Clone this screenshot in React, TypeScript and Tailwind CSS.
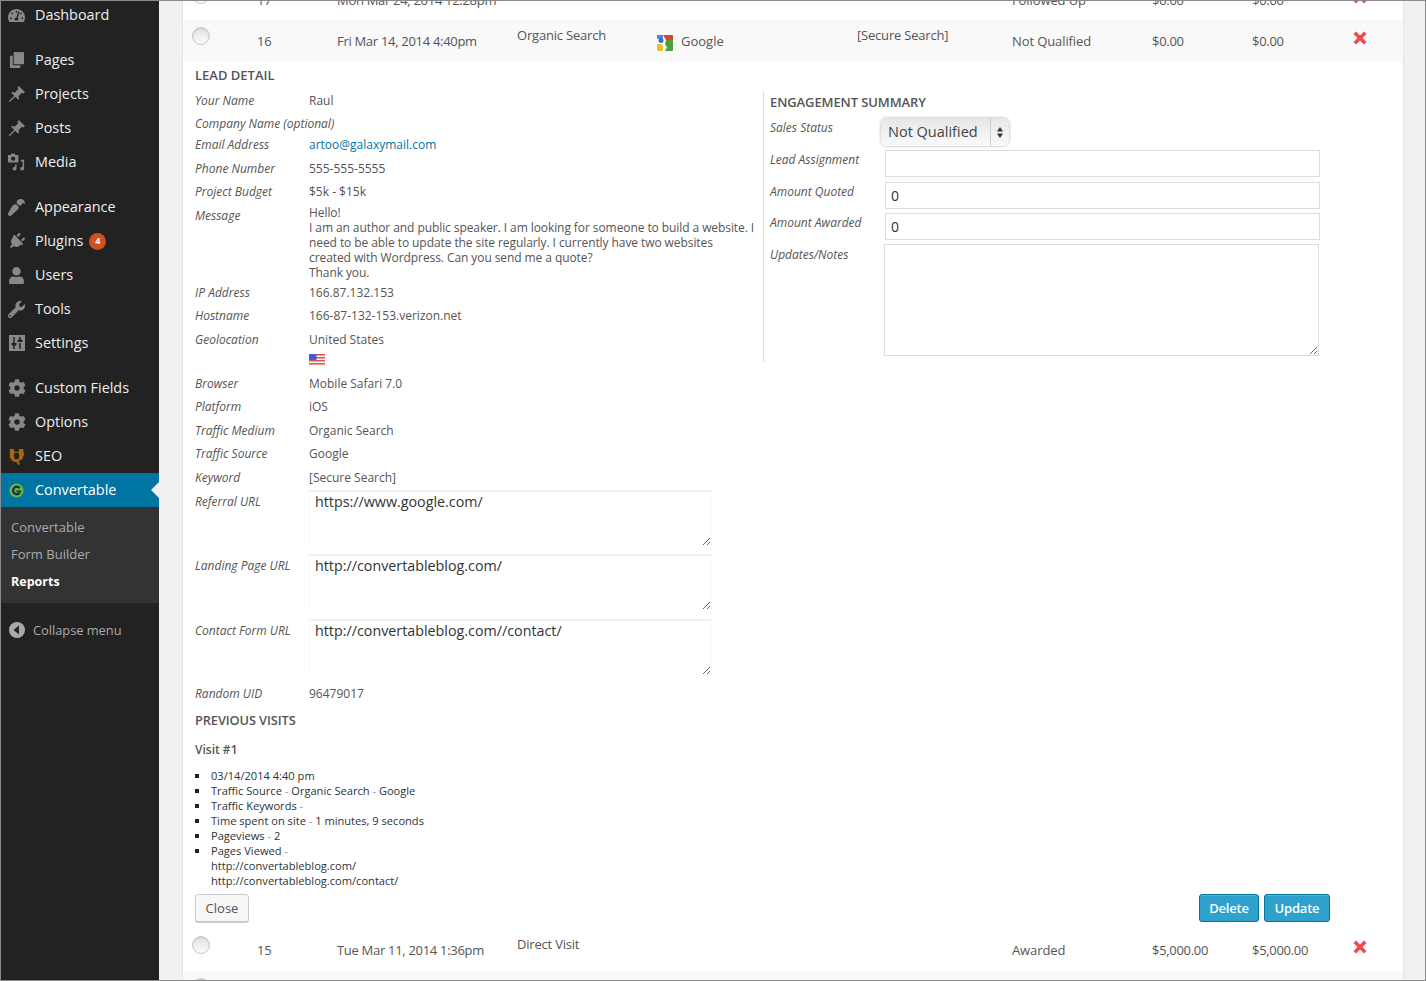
import type { ReactNode } from "react";
import { FaCog, FaPlug, FaUser, FaWrench, FaPaintBrush, FaTachometerAlt } from "react-icons/fa";

const iconClass = "h-[17px] w-[17px] text-[#888]";

function PinIcon() {
  return (
    <svg viewBox="0 0 20 20" className="h-[18px] w-[18px]" fill="#888">
      <path d="M12 1 19 8 17 9.500 15.500 8.500 11.500 12.500C12.500 14 12.500 15.500 11.500 16.500L8 13 2 19H1V18L7 12 3.500 8.500C4.500 7.500 6 7.500 7.500 8.500L11.500 4.500 10.500 3z" />
    </svg>
  );
}

function PagesIcon() {
  return (
    <svg viewBox="0 0 16 18" className="h-[17px] w-[15px]" fill="#888">
      <path d="M5 0h11v13H5z" />
      <path d="M1 4h3v10h8v3H1z" />
    </svg>
  );
}

function MediaIcon() {
  return (
    <svg viewBox="0 0 20 20" className="h-[19px] w-[19px]" fill="#888">
      <path d="M1 2h3l1-1.500h3L9 2h3v8H1z" />
      <circle cx="6.500" cy="6" r="2.200" fill="#222" />
      <path d="M18 7v9.500a2 1.800 0 1 1-1.500-1.700V9h-2V7zM10 12v4.500a2 1.800 0 1 1-1.500-1.700V12z" />
    </svg>
  );
}

function SettingsIcon() {
  return (
    <svg viewBox="0 0 16 16" className="h-[16px] w-[16px]">
      <rect width="16" height="16" fill="#888" />
      <path d="M5 2v6M5 12v2M11 2v2M11 8v6" stroke="#222" strokeWidth="1.500" />
      <path d="M2.500 8h5v1.500L5 12 2.500 9.500zM8.500 7h5V5.500L11 3.500 8.500 5.500z" fill="#222" />
    </svg>
  );
}

function SeoIcon() {
  return (
    <svg viewBox="0 0 18 18" className="h-[17px] w-[17px]" fill="#a8660f">
      <path d="M2 1h4l1 3h4l1-3h4l1 6-2 5-4 2 2 3-2 1-2-3-4-1-3-4z" />
      <path d="M7 5h4l1 3-1 4H7L6 8z" fill="#222" />
    </svg>
  );
}

function ConvertableIcon() {
  return (
    <svg viewBox="0 0 16 16" className="h-[15px] w-[15px]">
      <circle cx="8" cy="8" r="7.500" fill="#6cb33f" />
      <path d="M11.500 5.500A4 4 0 1 0 11.500 10.500" fill="none" stroke="#11304a" strokeWidth="2.400" />
      <path d="M8 8h5v2H8z" fill="#11304a" />
    </svg>
  );
}

function GoogleIcon() {
  return (
    <svg viewBox="0 0 16 16" className="h-[16px] w-[16px]">
      <rect width="16" height="16" rx="1" fill="#fff" />
      <path d="M0 0h6v4H0z" fill="#4a86e8" />
      <path d="M6 0h9a1 1 0 0 1 1 1v4H9z" fill="#d9432f" />
      <path d="M9 5h7v10a1 1 0 0 1-1 1H7z" fill="#4f9f3a" />
      <path d="M0 9h5l2 7H1a1 1 0 0 1-1-1z" fill="#f3c02c" />
      <circle cx="4" cy="5.500" r="2.500" fill="#3f6fc4" />
      <path d="M6 7l4 5-2 4H6z" fill="#fff" />
    </svg>
  );
}

function DeleteIcon() {
  return (
    <svg viewBox="0 0 14 14" className="h-[14px] w-[14px]" fill="#f0494f">
      <path d="M3 .5 7 4.500 11 .5 13.500 3 9.500 7 13.500 11 11 13.500 7 9.500 3 13.500.5 11 4.500 7 .5 3z" />
    </svg>
  );
}

function FlagIcon() {
  return (
    <svg viewBox="0 0 16 11" className="h-[11px] w-[16px]">
      <rect width="16" height="11" fill="#f4f4f4" />
      <path d="M0 0h16v1.500H0zM0 3h16v1.500H0zM0 6h16v1.500H0zM0 9h16v1.500H0z" fill="#e0524a" />
      <rect width="7.500" height="6" fill="#3f5fd0" />
    </svg>
  );
}

function CollapseIcon() {
  return (
    <svg viewBox="0 0 16 16" className="h-[16px] w-[16px]">
      <circle cx="8" cy="8" r="8" fill="#aaa" />
      <path d="M10 3.500v9L4.500 8z" fill="#222" />
    </svg>
  );
}

type NavItem = { label: string; icon: ReactNode; badge?: string; gap?: boolean };

const navItems: NavItem[] = [
  { label: "Dashboard", icon: <FaTachometerAlt className={iconClass} />, gap: true },
  { label: "Pages", icon: <PagesIcon /> },
  { label: "Projects", icon: <PinIcon /> },
  { label: "Posts", icon: <PinIcon /> },
  { label: "Media", icon: <MediaIcon />, gap: true },
  { label: "Appearance", icon: <FaPaintBrush className={`${iconClass} rotate-180`} /> },
  { label: "Plugins", icon: <FaPlug className={`${iconClass} rotate-45`} />, badge: "4" },
  { label: "Users", icon: <FaUser className={iconClass} /> },
  { label: "Tools", icon: <FaWrench className={iconClass} /> },
  { label: "Settings", icon: <SettingsIcon />, gap: true },
  { label: "Custom Fields", icon: <FaCog className="h-[18px] w-[18px] text-[#888]" /> },
  { label: "Options", icon: <FaCog className="h-[18px] w-[18px] text-[#888]" /> },
  { label: "SEO", icon: <SeoIcon /> },
];

function Sidebar() {
  return (
    <aside className="-mt-[3px] w-[158px] shrink-0 bg-[#222]">
      {navItems.map((item) => (
        <div key={item.label} className={item.gap ? "mb-[11px]" : ""}>
          <div className="flex h-[34px] items-center text-[14.4px] font-medium text-[#eee]">
            <span className="mr-[3px] flex w-[31px] shrink-0 justify-center">{item.icon}</span>
            <span>{item.label}</span>
            {item.badge && (
              <span className="ml-[6px] flex h-[17px] w-[17px] items-center justify-center rounded-full bg-[#d54e21] text-[9px] font-bold text-white">
                {item.badge}
              </span>
            )}
          </div>
        </div>
      ))}
      <div className="relative flex h-[34px] items-center bg-[#0074a2] text-[14.4px] font-medium text-white">
        <span className="mr-[3px] flex w-[31px] shrink-0 justify-center">
          <ConvertableIcon />
        </span>
        <span>Convertable</span>
        <span className="absolute right-0 top-[9px] h-0 w-0 border-y-[8px] border-r-[8px] border-y-transparent border-r-[#f1f1f1]" />
      </div>
      <div className="h-[96px] bg-[#333] pl-[10px] pt-[7px] text-[13px] leading-[27px] text-[#aaa]">
        <div>Convertable</div>
        <div>Form Builder</div>
        <div className="text-[12.5px] font-bold text-white">Reports</div>
      </div>
      <div className="mt-[18px] flex items-center text-[12.8px] leading-[18px] text-[#aaa]">
        <span className="ml-[8px] mr-[8px]">
          <CollapseIcon />
        </span>
        Collapse menu
      </div>
    </aside>
  );
}

type LeadRow = {
  id: string;
  date: string;
  source?: string;
  engine?: string;
  keyword?: string;
  status: string;
  quoted: string;
  awarded: string;
  className: string;
};

function Radio() {
  return (
    <span className="block h-[18px] w-[18px] rounded-full border border-[#c8c8c8] bg-gradient-to-b from-[#e2e2e2] to-[#fbfbfb] shadow-[inset_0_1px_2px_rgba(0,0,0,0.12)]" />
  );
}

function TableRow({ row }: { row: LeadRow }) {
  return (
    <div className={`grid shrink-0 grid-cols-[65px_80px_180px_140px_200px_155px_140px_100px_101px_1fr] pl-[9px] text-[13px] leading-[20px] tracking-[-0.3px] text-[#555] ${row.className}`}>
      <div className="pt-[7px]"><Radio /></div>
      <div className="pt-[11px]">{row.id}</div>
      <div className="whitespace-nowrap pt-[11px]">{row.date}</div>
      <div className="pt-[5px] tracking-[-0.2px]">{row.source}</div>
      <div className="flex items-start gap-[8px] pt-[11px] tracking-normal">
        {row.engine && (
          <>
            <span className="pt-[4px]"><GoogleIcon /></span>
            {row.engine}
          </>
        )}
      </div>
      <div className="pt-[5px] tracking-[-0.2px]">{row.keyword}</div>
      <div className="pt-[11px] tracking-[-0.1px]">{row.status}</div>
      <div className="pt-[11px]">{row.quoted}</div>
      <div className="pt-[11px]">{row.awarded}</div>
      <div className="pt-[11px]"><DeleteIcon /></div>
    </div>
  );
}

const label = "w-[114px] shrink-0 whitespace-nowrap italic";

function DetailRow({ name, h, children }: { name: string; h: string; children?: ReactNode }) {
  return (
    <div className={`flex ${h}`}>
      <div className={label}>{name}</div>
      <div className="min-w-0 flex-1">{children}</div>
    </div>
  );
}

function UrlBox({ value }: { value: string }) {
  return (
    <textarea
      readOnly
      defaultValue={value}
      className="-mt-[4px] block h-[56px] w-[403px] border-x border-t-2 border-b-0 border-x-[#f8f8f8] border-t-[#f0f0f0] px-[5px] py-0 text-[14.3px] leading-[20px] text-[#333] outline-none"
    />
  );
}

function Dash() {
  return <span className="text-[#999]">-</span>;
}

function LeadDetail() {
  return (
    <div className="w-[568px] shrink-0">
      <h3 className="mb-[10px] mt-[5px] text-[13px] font-semibold leading-[16px]">LEAD DETAIL</h3>
      <DetailRow name="Your Name" h="h-[23px]">Raul</DetailRow>
      <DetailRow name="Company Name (optional)" h="h-[21px]" />
      <DetailRow name="Email Address" h="h-[24px]">
        <span className="text-[#0074a2]">artoo@galaxymail.com</span>
      </DetailRow>
      <DetailRow name="Phone Number" h="h-[23px]">555-555-5555</DetailRow>
      <DetailRow name="Project Budget" h="h-[24px]">$5k - $15k</DetailRow>
      <DetailRow name="Message" h="h-[77px]">
        <div className="-mt-[3px] w-[448px] leading-[15px] tracking-[-0.08px]">
          Hello!
          <br />
          I am an author and public speaker. I am looking for someone to build a website. I need to be able to update the site regularly. I currently have two websites created with Wordpress. Can you send me a quote?
          <br />
          Thank you.
        </div>
      </DetailRow>
      <DetailRow name="IP Address" h="h-[23px]">166.87.132.153</DetailRow>
      <DetailRow name="Hostname" h="h-[24px]">166-87-132-153.verizon.net</DetailRow>
      <DetailRow name="Geolocation" h="h-[44px]">
        United States
        <div className="mt-[6px]"><FlagIcon /></div>
      </DetailRow>
      <DetailRow name="Browser" h="h-[23px]">Mobile Safari 7.0</DetailRow>
      <DetailRow name="Platform" h="h-[24px]">iOS</DetailRow>
      <DetailRow name="Traffic Medium" h="h-[23px]">Organic Search</DetailRow>
      <DetailRow name="Traffic Source" h="h-[24px]">Google</DetailRow>
      <DetailRow name="Keyword" h="h-[24px]">[Secure Search]</DetailRow>
      <DetailRow name="Referral URL" h="h-[64px]"><UrlBox value="https://www.google.com/" /></DetailRow>
      <DetailRow name="Landing Page URL" h="h-[65px]"><UrlBox value="http://convertableblog.com/" /></DetailRow>
      <DetailRow name="Contact Form URL" h="h-[63px]"><UrlBox value="http://convertableblog.com//contact/" /></DetailRow>
      <DetailRow name="Random UID" h="h-[27px]">96479017</DetailRow>
      <h3 className="-mt-[1px] h-[30px] text-[12.8px] font-semibold tracking-[-0.1px]">PREVIOUS VISITS</h3>
      <h4 className="h-[26px] text-[12px] font-semibold">Visit #1</h4>
      <ul className="list-none text-[11.100px] leading-[15px] text-[#2c3338]">
        {[
          <>03/14/2014 4:40 pm</>,
          <>Traffic Source <Dash /> Organic Search <Dash /> Google</>,
          <>Traffic Keywords <Dash /></>,
          <>Time spent on site <Dash /> 1 minutes, 9 seconds</>,
          <>Pageviews <Dash /> 2</>,
          <>Pages Viewed <Dash /><br />http://convertableblog.com/<br />http://convertableblog.com/contact/</>,
        ].map((item, i) => (
          <li key={i} className="relative pl-[16px]">
            <span className="absolute left-0 top-[6px] h-[4px] w-[4px] bg-[#222]" />
            {item}
          </li>
        ))}
      </ul>
    </div>
  );
}

const summaryInput = "h-[27px] w-[435px] border border-[#ddd] px-[5px] text-[14px] text-[#333] outline-none";

function EngagementSummary() {
  return (
    <div className="mt-[29px] h-[271px] w-[580px] border-l border-[#ddd] pl-[6px] pt-[3px]">
      <h3 className="mb-[8px] whitespace-nowrap text-[13px] font-semibold leading-[16px] tracking-[-0.1px]">ENGAGEMENT SUMMARY</h3>
      <div className="mb-[4px] flex h-[28px]">
        <div className="w-[111px] shrink-0 pt-[2px] italic">Sales Status</div>
        <div className="flex h-[28px] w-[128px] items-center rounded-[6px] bg-gradient-to-b from-[#e6e6e6] to-[#fafafa] pl-[7px] text-[14.5px] text-[#444] shadow-[0_0_3px_rgba(0,0,0,0.35)]">
          <span className="flex-1">Not Qualified</span>
          <span className="flex h-full w-[19px] items-center justify-center border-l border-[#ccc]">
            <svg viewBox="0 0 6 11" className="h-[11px] w-[6px]" fill="#333">
              <path d="M3 0l3 4.500H0zM3 11L0 6.500h6z" />
            </svg>
          </span>
        </div>
      </div>
      <div className="mb-[5px] flex">
        <div className="w-[115px] shrink-0 pt-[2px] italic">Lead Assignment</div>
        <input readOnly defaultValue="" className={summaryInput} />
      </div>
      <div className="mb-[4px] flex">
        <div className="w-[115px] shrink-0 pt-[2px] italic">Amount Quoted</div>
        <input readOnly defaultValue="0" className={summaryInput} />
      </div>
      <div className="mb-[4px] flex">
        <div className="w-[115px] shrink-0 pt-[2px] italic">Amount Awarded</div>
        <input readOnly defaultValue="0" className={summaryInput} />
      </div>
      <div className="flex">
        <div className="w-[114px] shrink-0 pt-[3px] italic">Updates/Notes</div>
        <textarea readOnly className="h-[112px] w-[435px] border border-[#ddd] outline-none" />
      </div>
    </div>
  );
}

const blueButton = "flex h-[28px] items-center justify-center rounded-[3px] border border-[#0074a2] bg-[#2ea2cc] text-[13px] font-semibold tracking-[-0.2px] text-white shadow-[inset_0_1px_0_rgba(120,200,230,0.5)]";

export default function App() {
  return (
    <div className="flex h-[981px] w-[1426px] overflow-hidden border border-[#8a8a8a] bg-[#f1f1f1] font-['Open_Sans',sans-serif] text-[12px] leading-[16px] text-[#555]">
      <Sidebar />
      <main className="ml-[23px] flex w-[1222px] shrink-0 flex-col border-x border-[#e5e5e5] bg-white">
        <div className="-mt-[22px]">
          <TableRow row={{ id: "17", date: "Mon Mar 24, 2014 12:28pm", status: "Followed Up", quoted: "$0.00", awarded: "$0.00", className: "h-[41px] bg-white" }} />
        </div>
        <TableRow row={{ id: "16", date: "Fri Mar 14, 2014 4:40pm", source: "Organic Search", engine: "Google", keyword: "[Secure Search]", status: "Not Qualified", quoted: "$0.00", awarded: "$0.00", className: "h-[42px] bg-[#f9f9f9]" }} />
        <div className="flex pl-[12px]">
          <LeadDetail />
          <EngagementSummary />
        </div>
        <div className="mb-[7px] mt-[6px] flex h-[28px] shrink-0 items-start pl-[12px]">
          <button className="flex h-[28px] w-[54px] items-center justify-center rounded-[3px] border border-[#ccc] bg-[#f7f7f7] text-[13px] text-[#555] shadow-[0_1px_0_#ccc]">
            Close
          </button>
          <div className="ml-[950px] flex gap-[5px]">
            <button className={`${blueButton} w-[60px]`}>Delete</button>
            <button className={`${blueButton} w-[66px]`}>Update</button>
          </div>
        </div>
        <TableRow row={{ id: "15", date: "Tue Mar 11, 2014 1:36pm", source: "Direct Visit", status: "Awarded", quoted: "$5,000.00", awarded: "$5,000.00", className: "h-[42px] bg-white" }} />
        <TableRow row={{ id: "14", date: "", status: "", quoted: "", awarded: "", className: "h-[42px] bg-[#f9f9f9]" }} />
      </main>
    </div>
  );
}
